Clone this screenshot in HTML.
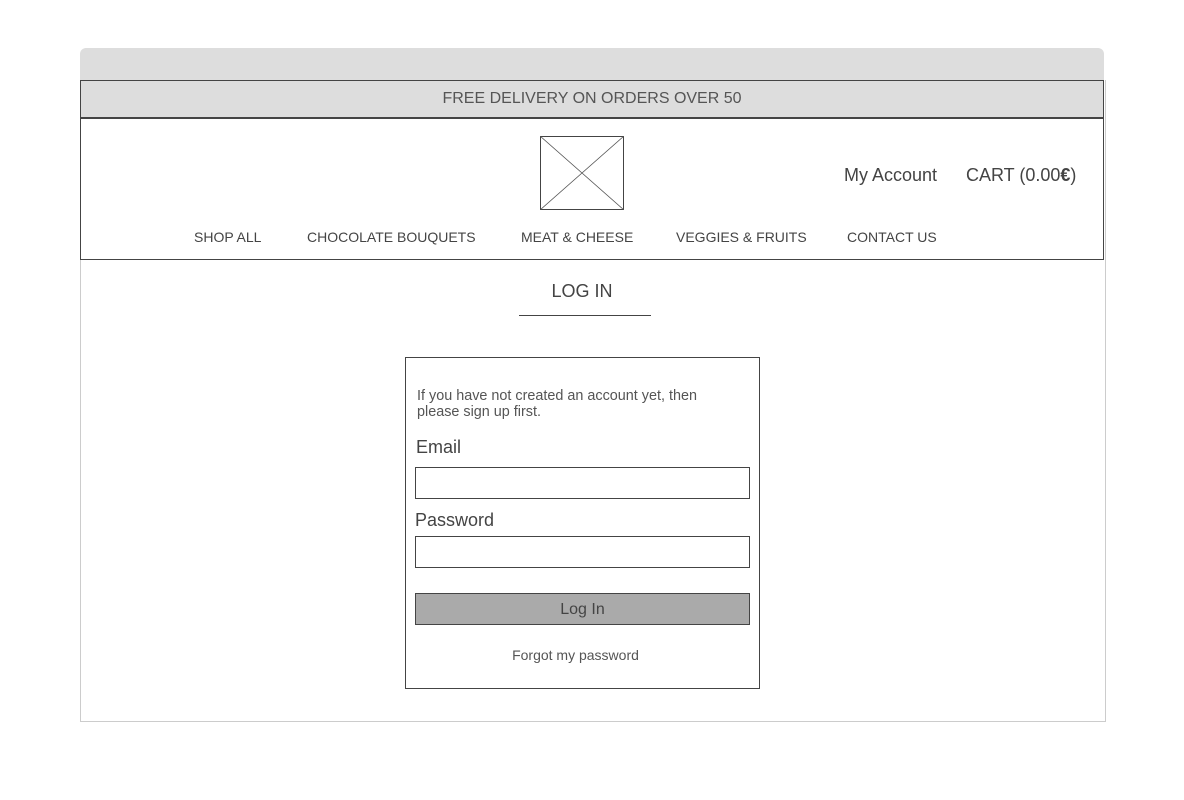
<!DOCTYPE html>
<html><head><meta charset="utf-8"><style>
body{margin:0;width:1184px;height:800px;background:#fff;font-family:"Liberation Sans",sans-serif;color:#444;position:relative;overflow:hidden}
.a{position:absolute;white-space:nowrap}
</style></head><body>
<div class="a" style="left:80px;top:48px;width:1024px;height:33px;background:#dddddd;border-radius:6px 6px 0 0"></div>
<div class="a" style="left:80px;top:80px;height:642px;border:1px solid #ccc;border-top:none;box-sizing:border-box;width:1026px"></div>
<div class="a" style="left:80px;top:80px;width:1024px;height:39px;background:#dddddd;border:1px solid #444;border-bottom:2px solid #444;box-sizing:border-box"></div>
<div class="a" style="left:80px;top:90px;width:1024px;text-align:center;font-size:16px;color:#555">FREE DELIVERY ON ORDERS OVER 50</div>
<div class="a" style="left:80px;top:118px;width:1024px;height:142px;border:1px solid #444;border-top:none;box-sizing:border-box"></div>
<svg class="a" style="left:540px;top:136px" width="84" height="74"><rect x="0.5" y="0.5" width="83" height="73" fill="#fff" stroke="#444"/><path d="M0 0L84 74M84 0L0 74" stroke="#555" stroke-width="0.8"/></svg>
<div class="a" style="left:844px;top:165px;font-size:18px;color:#444">My Account</div>
<div class="a" style="left:966px;top:165px;font-size:18px;color:#444">CART (0.00<b>€</b>)</div>
<div class="a" style="left:194px;top:229px;font-size:14px">SHOP ALL</div>
<div class="a" style="left:307px;top:229px;font-size:14px">CHOCOLATE BOUQUETS</div>
<div class="a" style="left:521px;top:229px;font-size:14px">MEAT &amp; CHEESE</div>
<div class="a" style="left:676px;top:229px;font-size:14px">VEGGIES &amp; FRUITS</div>
<div class="a" style="left:847px;top:229px;font-size:14px">CONTACT US</div>
<div class="a" style="left:516px;top:281px;width:132px;text-align:center;font-size:18px;color:#444">LOG IN</div>
<div class="a" style="left:519px;top:315px;width:132px;height:1px;background:#444"></div>
<div class="a" style="left:405px;top:357px;width:355px;height:332px;border:1px solid #444;box-sizing:border-box"></div>
<div class="a" style="left:417px;top:388px;font-size:14.4px;line-height:16px;color:#555">If you have not created an account yet, then<br>please sign up first.</div>
<div class="a" style="left:416px;top:437px;font-size:18px">Email</div>
<div class="a" style="left:415px;top:467px;width:335px;height:32px;border:1px solid #444;box-sizing:border-box"></div>
<div class="a" style="left:415px;top:510px;font-size:18px">Password</div>
<div class="a" style="left:415px;top:536px;width:335px;height:32px;border:1px solid #444;box-sizing:border-box"></div>
<div class="a" style="left:415px;top:593px;width:335px;height:32px;border:1px solid #444;box-sizing:border-box;background:#aaaaaa;text-align:center;line-height:31px;font-size:16px">Log In</div>
<div class="a" style="left:405px;top:647px;width:341px;text-align:center;font-size:14px;color:#555">Forgot my password</div>
</body></html>
